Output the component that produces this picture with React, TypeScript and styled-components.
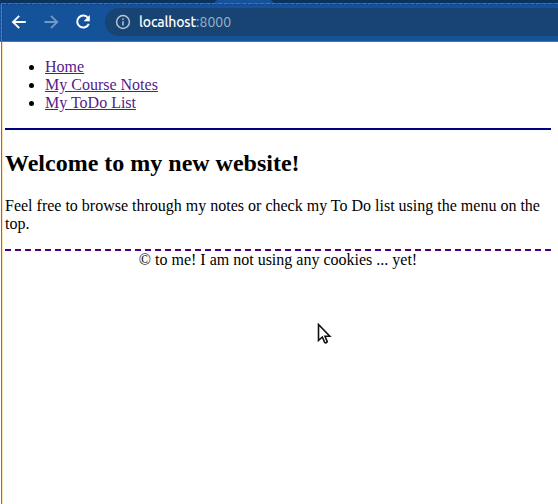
import React from "react";
import styled, { createGlobalStyle } from "styled-components";

const GlobalStyle = createGlobalStyle`
  html, body { margin: 0; height: 100%; background: #fff; overflow: hidden; }
  #root { height: 100%; }
`;

const Window = styled.div`
  position: relative;
  height: 504px;
  width: 558px;
  overflow: hidden;
  color: #000;
  font: 16px/18px "Liberation Serif", "Times New Roman", serif;
`;

const TabStrip = styled.div`
  height: 4px;
  padding-left: 215px;
  background: #08345f;
`;

const ActiveTab = styled.div`
  width: 58px;
  height: 4px;
  border-radius: 3px 3px 0 0;
  background: #14529a;
`;

const Toolbar = styled.div`
  display: flex;
  align-items: center;
  box-sizing: border-box;
  height: 38px;
  padding: 0 0 1px 10px;
  border-bottom: 1px solid #4679b2;
  background: #14529a;
`;

const NavButton = styled.span<{ $dim?: boolean }>`
  display: flex;
  width: 18px;
  height: 18px;
  margin-right: 14px;
  color: ${(p) => (p.$dim ? "#7398c4" : "#fff")};
`;

const AddressBar = styled.div`
  display: flex;
  align-items: center;
  flex: 1;
  box-sizing: border-box;
  height: 28px;
  margin-left: -1px;
  padding-left: 10px;
  border-radius: 14px 0 0 14px;
  background: #184474;
`;

const Address = styled.span`
  margin-left: 8px;
  color: #fff;
  font: 500 14px/20px Ubuntu, "Noto Sans", sans-serif;
  letter-spacing: -0.15px;
  white-space: nowrap;
`;

const Port = styled.span`
  color: #9fb3c9;
  font-weight: 400;
  letter-spacing: 0;
`;

const Page = styled.div`
  width: 546px;
  padding: 16px 0 0 5px;
`;

const Menu = styled.nav`
  padding-bottom: 16px;
  border-bottom: 2px solid #000080;
`;

const LinkList = styled.ul`
  margin: 0;
  padding-left: 40px;
`;

const PageLink = styled.a`
  color: #551a8b;
  text-decoration: underline;
`;

const Heading = styled.h2`
  margin: 20px 0;
  font-size: 24px;
  line-height: 27px;
`;

const Paragraph = styled.p`
  margin: 0 0 16px;
`;

const Footer = styled.footer`
  border-top: 2px dashed #4b0082;
  text-align: center;
`;

const CaptureFrame = styled.div`
  position: absolute;
  inset: 3px 0 0 1px;
  border-left: 1px solid #e54646;
  pointer-events: none;
  &::before {
    content: "";
    position: absolute;
    inset: 0 0 auto 0;
    height: 1px;
    background: repeating-linear-gradient(90deg, #d33d4c 0 4px, #7a3c70 4px 6px);
  }
  &::after {
    content: "";
    position: absolute;
    inset: 1px 0 auto 0;
    height: 1px;
    background: repeating-linear-gradient(90deg, #153c94 0 2px, #14529a 2px 4px);
  }
`;

const FrameGlow = styled.div`
  position: absolute;
  left: 2px;
  top: 42px;
  bottom: 0;
  width: 1px;
  background: #ffe0b8;
`;

const FrameEdge = styled.div`
  position: absolute;
  left: 2px;
  top: 5px;
  width: 1px;
  height: 36px;
  background: repeating-linear-gradient(#153c94 0 2px, #14529a 2px 4px);
`;

const Pointer = styled.svg`
  position: absolute;
  left: 317px;
  top: 323px;
`;

const links = ["Home", "My Course Notes", "My ToDo List"];

function Arrow({ forward = false }: { forward?: boolean }) {
  return (
    <svg width="18" height="18" viewBox="0 0 18 18" fill="none" stroke="currentColor" strokeWidth="1.9">
      <path d={forward ? "M2.5 9H15M9 2.8L15.2 9L9 15.2" : "M15.8 9H3.2M9.2 2.8L3 9L9.2 15.2"} />
    </svg>
  );
}

export default function App() {
  return (
    <>
      <GlobalStyle />
      <Window>
        <TabStrip><ActiveTab /></TabStrip>
        <Toolbar>
          <NavButton><Arrow /></NavButton>
          <NavButton $dim><Arrow forward /></NavButton>
          <NavButton>
            <svg width="18" height="18" viewBox="0 0 18 18" fill="none">
              <path d="M14.1 5.1A6 6 0 1 0 14.8 10.8" stroke="currentColor" strokeWidth="2" />
              <path d="M15.8 2V8.2H9.6Z" fill="currentColor" />
            </svg>
          </NavButton>
          <AddressBar>
            <svg width="16" height="16" viewBox="0 0 16 16" fill="none" stroke="#b5c5d6" strokeWidth="1.5">
              <circle cx="8" cy="8" r="6.4" />
              <path d="M8 7.2V11.5M8 4.4V6" />
            </svg>
            <Address>localhost<Port>:8000</Port></Address>
          </AddressBar>
        </Toolbar>
        <Page>
          <Menu>
            <LinkList>
              {links.map((label) => (
                <li key={label}><PageLink href="#">{label}</PageLink></li>
              ))}
            </LinkList>
          </Menu>
          <Heading>Welcome to my new website!</Heading>
          <Paragraph>Feel free to browse through my notes or check my To Do list using the menu on the top.</Paragraph>
          <Footer>© to me! I am not using any cookies ... yet!</Footer>
        </Page>
        <CaptureFrame />
        <FrameEdge />
        <FrameGlow />
        <Pointer width="15" height="23" viewBox="0 0 15 23">
          <path d="M1.5 1.5V17.5L5.3 14L7.8 19.6Q9.4 20.4 10.2 18.6L8 13.3H12.8Z" fill="#fff" stroke="#111" strokeWidth="1.6" />
        </Pointer>
      </Window>
    </>
  );
}
